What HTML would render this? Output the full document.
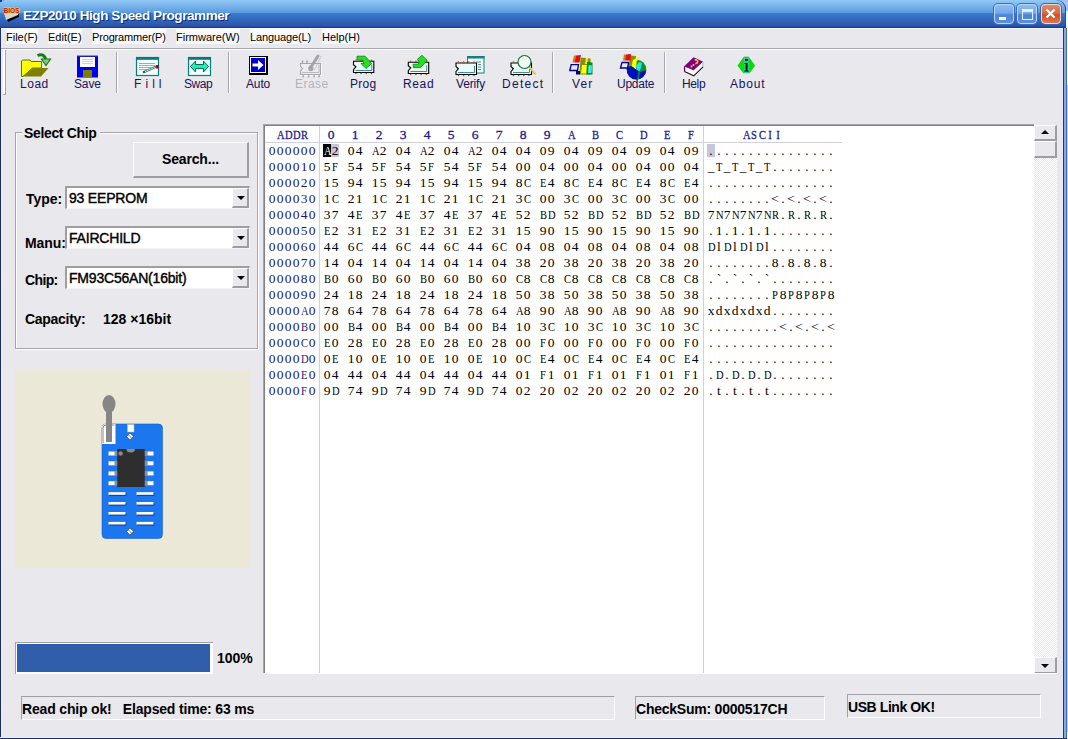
<!DOCTYPE html>
<html><head><meta charset="utf-8">
<style>
*{margin:0;padding:0;box-sizing:border-box}
html,body{width:1068px;height:739px;overflow:hidden}
body{position:relative;background:#c4cad6;font-family:"Liberation Sans",sans-serif;color:#000}
.a{position:absolute}
#win{position:absolute;left:0;top:0;width:1067px;height:739px;background:transparent}
#face{position:absolute;left:0;top:28px;width:1067px;height:711px;background:#e9e8ed}
/* title bar */
#tb{position:absolute;left:0;top:0;width:1066px;height:28px;border-radius:6px 9px 0 0;box-shadow:inset -1px 0 0 #2a4a8a;
background:linear-gradient(to bottom,#93caf6 0px,#78b3ea 6px,#5d9be0 12.5px,#3b7dcd 13px,#3471c4 17px,#2f5fb5 22px,#2c55ad 26px,#22408e 27px,#1d3a86 28px)}
#title{position:absolute;left:23px;top:8px;font-weight:bold;font-size:13.5px;color:#fff;letter-spacing:-0.42px;text-shadow:1px 1px 0 #0e2a6e;white-space:nowrap}
.tbtn{position:absolute;top:4px;width:20px;height:20px;border:1px solid #bcd6fb;border-radius:4px;box-shadow:0 0 0 1px #3a6cc4;
background:linear-gradient(to bottom,#8ebdf2,#74a8ea 45%,#4d84d6 55%,#5b8fd9)}
#close{border-color:#f4d8cc;background:linear-gradient(to bottom,#e08a70,#d86a48 45%,#d24e24 55%,#de7858)}
/* menu */
.menu{position:absolute;top:29px;height:15px;padding-top:1px;font-size:11px;line-height:15px;white-space:nowrap;background:#f9f9fb}
/* toolbar */
.tl{position:absolute;top:77px;font-size:12px;line-height:14px;color:#14145a;white-space:nowrap}
.sep{position:absolute;top:52px;width:2px;height:41px;border-left:1px solid #a6a6ac;border-right:1px solid #fff}
svg{position:absolute;overflow:visible}
/* left panel */
.lbl{position:absolute;font-weight:bold;font-size:14px;white-space:nowrap;line-height:16px}
.combo{position:absolute;left:65px;width:185px;height:23px;background:#fff;
border-top:2px solid #9d9da2;border-left:2px solid #9d9da2;border-bottom:1px solid #f4f4f4;border-right:1px solid #f4f4f4}
.combo .t{position:absolute;left:2px;top:2px;font-size:14px;line-height:16px;white-space:nowrap;letter-spacing:-0.2px;-webkit-text-stroke:0.4px #000}
.combo .dd{position:absolute;right:0;top:0;width:17px;height:20px;background:#e9e8ed;
border-top:1px solid #fff;border-left:1px solid #fff;border-right:2px solid #9d9da2;border-bottom:2px solid #9d9da2}
.combo .dd:after{content:"";position:absolute;left:4px;top:7px;border-left:4px solid transparent;border-right:4px solid transparent;border-top:4px solid #000}
/* hex */
#hex{position:absolute;left:263px;top:124px;width:771px;height:549px;background:#fff;border-top:1px solid #a4a4aa;border-left:1px solid #a4a4aa;box-shadow:inset 1px 1px 0 #808086}
.mono{font-family:"Liberation Serif",serif;font-size:13.5px;line-height:15px;white-space:pre}
.mono i,.mono u{font-style:normal;text-decoration:none;display:inline-block;width:8px;text-align:center}
.mono u{transform:scaleX(.78)}
.mono .w{color:#fff}
.addr{position:absolute;left:268px;color:#1a1a6e}
.hx{position:absolute;left:323px;color:#000}
.asc{position:absolute;left:707px;color:#000}

#hdr span{position:absolute;top:127px;color:#1a1a8a;width:8px;text-align:center;-webkit-text-stroke:0.3px #1a1a8a}
/* status */
.st{position:absolute;border-top:1px solid #a0a0a6;border-left:1px solid #a0a0a6;border-bottom:1px solid #fff;border-right:1px solid #fff}
.st .t{position:absolute;left:0px;font-weight:bold;font-size:14px;line-height:16px;white-space:nowrap}
</style></head><body>
<div id="win">
  <div class="a" style="left:1056px;top:0;width:12px;height:11px;background:#a0c4ee"></div>
  <div class="a" style="left:0;top:0;width:8px;height:8px;background:#7aaee8"></div>
  <div class="a" style="left:0;top:0;width:2px;height:2px;background:#203a7a"></div>
  <div class="a" style="left:1066px;top:11px;width:2px;height:17px;background:#f6f8fc"></div>
  <div class="a" style="left:1067px;top:11px;width:1px;height:74px;background:#f6f8fc"></div>
  <div class="a" style="left:1067px;top:732px;width:1px;height:7px;background:#f6f8fc"></div>
  <div id="face"></div>
  <!-- frame -->
  <div class="a" style="left:0;top:28px;width:1px;height:711px;background:#1f2f66"></div>
  <div class="a" style="left:1px;top:28px;width:1px;height:709px;background:#e4ecff"></div>
  <div class="a" style="left:1062px;top:28px;width:1px;height:709px;background:#e4ecff"></div>
  <div class="a" style="left:1063px;top:28px;width:1px;height:711px;background:#22376e"></div>
  <div class="a" style="left:1064px;top:28px;width:2px;height:711px;background:#86aadf"></div>
  <div class="a" style="left:1066px;top:28px;width:1px;height:711px;background:#4a6aa4"></div>
  <div class="a" style="left:0;top:737px;width:1063px;height:1px;background:#e8ecff"></div>
  <div class="a" style="left:0;top:738px;width:1067px;height:1px;background:#20306a"></div>

  <div id="tb"></div>
  <div class="a" style="left:1px;top:28px;width:1062px;height:1px;background:#f2f4fc"></div>
  <!-- app icon -->
  <svg style="left:3px;top:7px" width="16" height="14" viewBox="0 0 16 14">
    <polygon points="3,9 16,6 16,10 5,15" fill="#000"/>
    <polygon points="1,6 16,5 15,8 3,13" fill="#d8d4cc"/>
    <text x="0.5" y="5.8" font-size="6.5" font-weight="bold" fill="#b81808" stroke="#f4d040" stroke-width="1.2" paint-order="stroke" font-family="Liberation Sans" textLength="16" lengthAdjust="spacingAndGlyphs">BIOS</text>
  </svg>
  <div id="title">EZP2010 High Speed Programmer</div>
  <div class="tbtn" style="left:994px"><div class="a" style="left:4px;top:12px;width:7px;height:3px;background:#fff"></div></div>
  <div class="tbtn" style="left:1017px"><div class="a" style="left:4px;top:4px;width:11px;height:11px;border:1px solid #e4f0ff;border-top-width:3px"></div></div>
  <div class="tbtn" id="close" style="left:1041px;box-shadow:0 0 0 1px #3a64b4">
    <svg style="left:3px;top:3px" width="11" height="11" viewBox="0 0 11 11"><path d="M1.5 1.5 L9.5 9.5 M9.5 1.5 L1.5 9.5" stroke="#fff" stroke-width="2.3"/></svg>
  </div>

  <!-- menu -->
  <div class="menu" style="left:6px">File(F)</div>
  <div class="menu" style="left:48px">Edit(E)</div>
  <div class="menu" style="left:92px;letter-spacing:-0.16px">Programmer(P)</div>
  <div class="menu" style="left:176px">Firmware(W)</div>
  <div class="menu" style="left:250px;letter-spacing:-0.11px">Language(L)</div>
  <div class="menu" style="left:322px">Help(H)</div>
  <div class="a" style="left:1px;top:48px;width:1062px;height:1px;background:#a8a8b0"></div>
  <div class="a" style="left:1px;top:49px;width:1062px;height:1px;background:#fff"></div>

  <!-- toolbar gripper -->
  <div class="a" style="left:3px;top:50px;width:2px;height:44px;background:#fff"></div>
  <div class="a" style="left:5px;top:50px;width:1px;height:45px;background:#a6a6ac"></div>
  <div class="a" style="left:3px;top:94px;width:3px;height:1px;background:#a6a6ac"></div>
  <div class="sep" style="left:116px"></div>
  <div class="sep" style="left:228px"></div>
  <div class="sep" style="left:552px"></div>
  <div class="sep" style="left:664px"></div>

  <svg style="left:0;top:0" width="1068" height="100" viewBox="0 0 1068 100">
<path d="M21.5,76.5 V61 L22.5,60 H30 L31,61.5 H41.5 V68 H32.5 L23,76.5 Z" fill="#ffff00" stroke="#607000" stroke-width="1"/>
<polygon points="22.5,76.5 32.5,68 48.5,68 41,76.5" fill="#808000"/>
<path d="M37.5,55.5 Q44,52.5 46,60" fill="none" stroke="#108010" stroke-width="3"/>
<polygon points="41.5,59 50.5,59 46,65.5" fill="#90c090" stroke="#108010" stroke-width="1.2"/>

<rect x="77" y="56" width="21" height="21.5" fill="#0000f0"/>
<rect x="77" y="55.5" width="21" height="1" fill="#404060"/>
<rect x="80" y="57" width="15" height="10" fill="#fbfbf8"/>
<path d="M82,59.5 H93 M82,61.5 H93 M82,63.5 H93" stroke="#c8c8c8" stroke-width="0.8"/>
<rect x="83" y="70" width="9" height="7.5" fill="#808000"/>

<rect x="136.5" y="57.5" width="22" height="18" fill="#f2fdfd" stroke="#008080" stroke-width="1.2"/>
<rect x="136" y="57" width="23" height="2.8" fill="#0c7878"/>
<path d="M139,63.5 H155 M139,65.5 H155 M139,67.5 H151 M139,69.5 H147" stroke="#a09090" stroke-width="0.8"/>
<path d="M143,72.5 L156.5,66.5" stroke="#1a6060" stroke-width="2.2"/>
<path d="M145,71.6 L155.5,67" stroke="#e0f0f0" stroke-width="0.9"/>
<rect x="156" y="65" width="3" height="3.5" fill="#b00020"/>

<rect x="188.5" y="57.5" width="22" height="18" fill="#f2fdfd" stroke="#008080" stroke-width="1.2"/>
<rect x="188" y="57" width="23" height="2.8" fill="#0c7878"/>
<polygon points="190.5,66.5 195.5,61 195.5,64.5 203.5,64.5 203.5,61 208.5,66.5 203.5,72 203.5,68.5 195.5,68.5 195.5,72" fill="#20e8c8" stroke="#087040" stroke-width="1"/>

<rect x="249" y="56" width="19" height="19" fill="#000"/>
<rect x="250" y="57" width="16" height="16" fill="#fff"/>
<rect x="251" y="58" width="14" height="14" fill="#0000c8"/>
<polygon points="252.5,63.5 258,63.5 258,60 263.5,65 258,70 258,66.5 252.5,66.5" fill="#fff"/>

<g transform="translate(1,1)" stroke="#fff" fill="none" opacity="0.9">
<path d="M300.5,63.5 H320.5 V74.5 H300.5 V71 L302.5,68.5 L300.5,66 Z" stroke-width="1.1"/>
</g>
<path d="M300.5,63.5 H320.5 V74.5 H300.5 V71 L302.5,68.5 L300.5,66 Z" fill="#ecebef" stroke="#a8a8ac" stroke-width="1.1"/>
<path d="M302,72.5 H319 V64.5" fill="none" stroke="#b4b4b8" stroke-width="0.9"/>
<path d="M302.5,63 V60.5 M307,63 V60.5" stroke="#a8a8ac" stroke-width="1.6"/>
<path d="M302.3,76.2 H304 M307.8,76.2 H309.5 M313.3,76.2 H315 M318.3,76.2 H320" stroke="#a8a8ac" stroke-width="2"/>
<path d="M311,67 L318,56" stroke="#a4a4a8" stroke-width="3" stroke-linecap="round"/>
<ellipse cx="310.8" cy="68.3" rx="2.6" ry="2.9" fill="#a4a4a8"/>
<path d="M314.5,70 L321.5,55.5" stroke="#b0b0b4" stroke-width="1" stroke-dasharray="1.2,0.8"/>
<path d="M353.5,61.3 H373.8 V72.5 H353.5 V69.588 L355.9,66.89999999999999 L353.5,64.66 Z" fill="#eefafa" stroke="#000" stroke-width="1.1"/><path d="M355.5,70.5 H371.8 V64.3" fill="none" stroke="#3a9090" stroke-width="1"/><circle cx="355.9" cy="60.3" r="0.8" fill="#b05010"/><circle cx="355.9" cy="73.5" r="0.8" fill="#b05010"/><circle cx="361.09999999999997" cy="60.3" r="0.8" fill="#b05010"/><circle cx="361.09999999999997" cy="73.5" r="0.8" fill="#b05010"/><circle cx="366.29999999999995" cy="60.3" r="0.8" fill="#b05010"/><circle cx="366.29999999999995" cy="73.5" r="0.8" fill="#b05010"/><circle cx="371.5" cy="60.3" r="0.8" fill="#b05010"/><circle cx="371.5" cy="73.5" r="0.8" fill="#b05010"/>
<polygon points="357,56.2 365,56.2 369.5,61 371.5,63.5 366,68.5 361,63.5 364,63.5 362.5,60 357,60" fill="#22e022" stroke="#0c800c" stroke-width="0.8"/>
<path d="M408.3,62.3 H428.7 V73.5 H408.3 V70.588 L410.7,67.89999999999999 L408.3,65.66 Z" fill="#eefafa" stroke="#000" stroke-width="1.1"/><path d="M410.3,71.5 H426.7 V65.3" fill="none" stroke="#3a9090" stroke-width="1"/><circle cx="410.7" cy="61.3" r="0.8" fill="#b05010"/><circle cx="410.7" cy="74.5" r="0.8" fill="#b05010"/><circle cx="415.9" cy="61.3" r="0.8" fill="#b05010"/><circle cx="415.9" cy="74.5" r="0.8" fill="#b05010"/><circle cx="421.09999999999997" cy="61.3" r="0.8" fill="#b05010"/><circle cx="421.09999999999997" cy="74.5" r="0.8" fill="#b05010"/><circle cx="426.3" cy="61.3" r="0.8" fill="#b05010"/><circle cx="426.3" cy="74.5" r="0.8" fill="#b05010"/>
<polygon points="413.2,64.2 418.2,64.2 419.3,61.4 417.2,59.6 422,55.2 426.8,60 426.8,61 420.5,67.5 413.2,67.5" fill="#22e022" stroke="#0c800c" stroke-width="0.8"/>

<rect x="467.5" y="56.5" width="16.5" height="16.5" fill="#f0fcfc" stroke="#108080" stroke-width="1"/>
<rect x="467" y="56" width="17.5" height="2.5" fill="#108080"/>
<path d="M476,62 H481 M478,64.5 H481 M478,67 H481 M478,69.5 H481" stroke="#309090" stroke-width="0.9"/>
<path d="M456,63 H476.5 V74.5 H456 V71.51 L458.4,68.75 L456,66.45 Z" fill="#eefafa" stroke="#000" stroke-width="1.1"/><path d="M458,72.5 H474.5 V66" fill="none" stroke="#3a9090" stroke-width="1"/><circle cx="458.4" cy="62" r="0.8" fill="#b05010"/><circle cx="458.4" cy="75.5" r="0.8" fill="#b05010"/><circle cx="463.59999999999997" cy="62" r="0.8" fill="#b05010"/><circle cx="463.59999999999997" cy="75.5" r="0.8" fill="#b05010"/><circle cx="468.79999999999995" cy="62" r="0.8" fill="#b05010"/><circle cx="468.79999999999995" cy="75.5" r="0.8" fill="#b05010"/><circle cx="474.0" cy="62" r="0.8" fill="#b05010"/><circle cx="474.0" cy="75.5" r="0.8" fill="#b05010"/><path d="M511,63 H531.5 V74.5 H511 V71.51 L513.4,68.75 L511,66.45 Z" fill="#eefafa" stroke="#000" stroke-width="1.1"/><path d="M513,72.5 H529.5 V66" fill="none" stroke="#3a9090" stroke-width="1"/><circle cx="513.4" cy="62" r="0.8" fill="#b05010"/><circle cx="513.4" cy="75.5" r="0.8" fill="#b05010"/><circle cx="518.6" cy="62" r="0.8" fill="#b05010"/><circle cx="518.6" cy="75.5" r="0.8" fill="#b05010"/><circle cx="523.8" cy="62" r="0.8" fill="#b05010"/><circle cx="523.8" cy="75.5" r="0.8" fill="#b05010"/><circle cx="529.0" cy="62" r="0.8" fill="#b05010"/><circle cx="529.0" cy="75.5" r="0.8" fill="#b05010"/>
<circle cx="524.5" cy="62" r="6.5" fill="#f2f8f2" stroke="#107030" stroke-width="1.1"/>
<path d="M529.5,67.5 L536,74.5" stroke="#e0dc70" stroke-width="2.4"/>
<path d="M530,68.8 L535.5,74.6" stroke="#a8a040" stroke-width="0.7"/>

<polygon points="572.5,62.5 574,55.5 576,55.5 574.5,62.5" fill="#d07820"/>
<polygon points="574.5,62.5 576,55.5 581,55 579.5,62.5" fill="#e01010"/>
<polygon points="579.5,74.5 580.5,57.5 590.5,58.5 590.5,74.5" fill="#889000"/>
<polygon points="581,73.5 582,65 587,65 586.5,73.5" fill="#ffff00"/>
<polygon points="585,64 586,58 588,58 587.5,64" fill="#f0f040"/>
<polygon points="586.5,74.5 587,62 592.5,62.5 592.5,74.5" fill="#108818"/>
<polygon points="588,73 588.5,65 592,65.5 591.5,73" fill="#30f0f0"/>
<path d="M569.8,70.5 L571.2,64.6 H578.5 L577.5,70.5 Z" fill="#e8e8f8" stroke="#000090" stroke-width="1.3"/>
<rect x="576" y="71" width="4" height="3.5" fill="#000080"/>

<circle cx="636.5" cy="69.5" r="9.8" fill="#109030"/>
<polygon points="628.6,69.5 630,55.6 636,56 634,69.5" fill="#8a9000"/>
<polygon points="631,69 633,60 637,58 636,69" fill="#ffff00"/>
<polygon points="635.5,61 638,57 640,57.5 637,61" fill="#f0f040"/>
<polygon points="636,66 639,62 642,63 640,71 637,70" fill="#20e8e8"/>
<path d="M626.7,69 Q629,64 633,67 Q636,70 640,72 Q644,70 646.3,70.5 A9.8,9.8 0 0 1 626.7,69 Z" fill="#0010b8"/>
<path d="M637,79 L638.5,71 L640,71.5 L639,79 Z" fill="#108050"/>
<polygon points="623,60.5 624,54.5 626,54.5 625,60.5" fill="#d07820"/>
<polygon points="625,60.5 626,54.5 631,54 630.5,60.5" fill="#e01010"/>
<path d="M620.5,68 L622,62.5 H628.5 L627.5,68 Z" fill="#e8e8f8" stroke="#000090" stroke-width="1.3"/>

<polygon points="684,66.5 693.6,57.2 703.2,61.8 693.6,70.4" fill="#800080"/>
<polygon points="684.2,66.5 693.6,70.4 703.2,61.8 703.2,66.8 693.8,75.8 684.2,71.5" fill="#fff"/>
<path d="M703,62 V66.8" stroke="#b0a0b0" stroke-width="0.8"/>
<path d="M684.6,66.3 V71.5" stroke="#600060" stroke-width="1.3"/>
<path d="M684.5,71.5 L693.8,75.8 L703,66.8" fill="none" stroke="#201020" stroke-width="1.1"/>
<path d="M694.6,60 Q698.2,59.6 697.6,62.4 Q697,63.6 695.3,63.6" fill="none" stroke="#f0c030" stroke-width="1.7"/>
<circle cx="693.5" cy="64.9" r="1" fill="#f0d060"/>
<circle cx="691.5" cy="66.6" r="1" fill="#f0d060"/>

<polygon points="744,57 748.5,57 754.8,65.6 749.5,72.8 743.3,72.8 737.9,65.6" fill="#00e000" stroke="#10b810" stroke-width="0.6"/>
<rect x="744.6" y="58.6" width="3.6" height="2.6" fill="#000060" stroke="#50e0d0" stroke-width="0.7"/>
<path d="M743.8,62.4 H748 V70.2 H749.2 V72 H743.8 V70.2 H745.2 V64 H743.8 Z" fill="#000060" stroke="#50e0d0" stroke-width="0.7"/>
</svg>

  <div class="tl" style="left:20px;letter-spacing:0.53px">Load</div>
  <div class="tl" style="left:74px;letter-spacing:-0.13px">Save</div>
  <div class="tl" style="left:134px;letter-spacing:4.07px">Fill</div>
  <div class="tl" style="left:184px;letter-spacing:-0.43px">Swap</div>
  <div class="tl" style="left:246px;letter-spacing:-0.13px">Auto</div>
  <div class="tl" style="left:295px;letter-spacing:0.45px;color:#b4b4b8">Erase</div>
  <div class="tl" style="left:350px;letter-spacing:0.3px">Prog</div>
  <div class="tl" style="left:403px;letter-spacing:0.63px">Read</div>
  <div class="tl" style="left:456px;letter-spacing:-0.16px">Verify</div>
  <div class="tl" style="left:502px;letter-spacing:1.3px">Detect</div>
  <div class="tl" style="left:572px;letter-spacing:1.1px">Ver</div>
  <div class="tl" style="left:617px;letter-spacing:-0.26px">Update</div>
  <div class="tl" style="left:682px;letter-spacing:-0.37px">Help</div>
  <div class="tl" style="left:730px;letter-spacing:0.82px">About</div>

  <!-- group box -->
  <div class="a" style="left:16px;top:133px;width:243px;height:217px;border:1px solid #fff"></div>
  <div class="a" style="left:15px;top:132px;width:243px;height:217px;border:1px solid #a4a4aa"></div>
  <div class="lbl" style="left:22px;top:125px;background:#e9e8ed;padding:0 4px 0 2px;letter-spacing:-0.35px">Select Chip</div>
  <div class="a" style="left:133px;top:142px;width:116px;height:36px;border-top:1px solid #fff;border-left:1px solid #fff;border-right:2px solid #9d9da2;border-bottom:2px solid #9d9da2"></div>
  <div class="lbl" style="left:162px;top:151px;letter-spacing:-0.16px">Search...</div>
  <div class="lbl" style="left:26px;top:191px;letter-spacing:-0.05px">Type:</div>
  <div class="combo" style="top:186px"><div class="t">93 EEPROM</div><div class="dd"></div></div>
  <div class="lbl" style="left:25px;top:235px;letter-spacing:-0.1px">Manu:</div>
  <div class="combo" style="top:226px"><div class="t">FAIRCHILD</div><div class="dd"></div></div>
  <div class="lbl" style="left:25px;top:272px;letter-spacing:-0.62px">Chip:</div>
  <div class="combo" style="top:266px"><div class="t">FM93C56AN(16bit)</div><div class="dd"></div></div>
  <div class="lbl" style="left:25px;top:311px;letter-spacing:-0.29px">Capacity:</div>
  <div class="lbl" style="left:103px;top:311px">128 ×16bit</div>

  <!-- chip picture -->
  <div class="a" style="left:15px;top:370px;width:235px;height:198px;background:#ebe8d8"></div>
  <svg style="left:0;top:0" width="1068" height="739" viewBox="0 0 1068 739"><rect x="102" y="424" width="60.5" height="114.5" rx="4" fill="#1c77ee" stroke="#1560c8" stroke-width="0.6"/><path d="M102,444 V428 Q102,424 106,424 H115.5 V444 Z" fill="#fff"/><path d="M103,443 V428 Q103,425 106,425 H114.5" fill="none" stroke="#666" stroke-width="0.8"/><ellipse cx="109" cy="404" rx="6.5" ry="9" fill="#868686"/><rect x="106" y="404" width="6" height="38" fill="#868686"/><rect x="127.5" y="424.5" width="6.5" height="7.5" fill="#fff" stroke="#bbb" stroke-width="0.5"/><rect x="127.5" y="434" width="5" height="5" transform="rotate(45 130 436.5)" fill="#fff" stroke="#333" stroke-width="0.6"/><path d="M128.2,434.7 L131.8,438.3" stroke="#555" stroke-width="0.8"/><rect x="127.5" y="529" width="5" height="5" transform="rotate(45 130 531.5)" fill="#fff" stroke="#333" stroke-width="0.6"/><path d="M128.2,529.7 L131.8,533.3" stroke="#555" stroke-width="0.8"/><rect x="117.2" y="449" width="27.6" height="38" fill="#2e2e2e"/><path d="M126.5,449 A4.2,3.5 0 0 0 135,449 Z" fill="#8a8a8a"/><circle cx="120.6" cy="453.5" r="2.2" fill="#8a8a8a"/><rect x="108.5" y="451.5" width="6.5" height="4" fill="#fff"/><rect x="114.5" y="451.0" width="2.7" height="5" fill="#909090"/><rect x="147.2" y="451.5" width="6.3" height="4" fill="#fff"/><rect x="144.8" y="451.0" width="2.7" height="5" fill="#909090"/><rect x="108.5" y="461.3" width="6.5" height="4" fill="#fff"/><rect x="114.5" y="460.8" width="2.7" height="5" fill="#909090"/><rect x="147.2" y="461.3" width="6.3" height="4" fill="#fff"/><rect x="144.8" y="460.8" width="2.7" height="5" fill="#909090"/><rect x="108.5" y="471.4" width="6.5" height="4" fill="#fff"/><rect x="114.5" y="470.9" width="2.7" height="5" fill="#909090"/><rect x="147.2" y="471.4" width="6.3" height="4" fill="#fff"/><rect x="144.8" y="470.9" width="2.7" height="5" fill="#909090"/><rect x="108.5" y="481.2" width="6.5" height="4" fill="#fff"/><rect x="114.5" y="480.7" width="2.7" height="5" fill="#909090"/><rect x="147.2" y="481.2" width="6.3" height="4" fill="#fff"/><rect x="144.8" y="480.7" width="2.7" height="5" fill="#909090"/><rect x="109.1" y="493.0" width="17.3" height="2.8" fill="#0c3a98"/><rect x="108.5" y="492.2" width="17" height="2.6" fill="#fff"/><rect x="137.1" y="493.0" width="17.3" height="2.8" fill="#0c3a98"/><rect x="136.5" y="492.2" width="17" height="2.6" fill="#fff"/><rect x="109.1" y="502.8" width="17.3" height="2.8" fill="#0c3a98"/><rect x="108.5" y="502" width="17" height="2.6" fill="#fff"/><rect x="137.1" y="502.8" width="17.3" height="2.8" fill="#0c3a98"/><rect x="136.5" y="502" width="17" height="2.6" fill="#fff"/><rect x="109.1" y="512.8" width="17.3" height="2.8" fill="#0c3a98"/><rect x="108.5" y="512" width="17" height="2.6" fill="#fff"/><rect x="137.1" y="512.8" width="17.3" height="2.8" fill="#0c3a98"/><rect x="136.5" y="512" width="17" height="2.6" fill="#fff"/><rect x="109.1" y="522.6999999999999" width="17.3" height="2.8" fill="#0c3a98"/><rect x="108.5" y="521.9" width="17" height="2.6" fill="#fff"/><rect x="137.1" y="522.6999999999999" width="17.3" height="2.8" fill="#0c3a98"/><rect x="136.5" y="521.9" width="17" height="2.6" fill="#fff"/></svg>

  <!-- progress -->
  <div class="a" style="left:15px;top:642px;width:198px;height:32px;border-top:1px solid #a0a0a6;border-left:1px solid #a0a0a6;background:#fafcff"></div>
  <div class="a" style="left:17px;top:644px;width:193px;height:28px;background:#315eab"></div>
  <div class="lbl" style="left:217px;top:650px">100%</div>

  <!-- hex view -->
  <div id="hex"></div>
  <div class="a" style="left:265px;top:142px;width:577px;height:1px;background:#d0d0de"></div>
  <div class="a" style="left:319px;top:126px;width:1px;height:547px;background:#d0d0de"></div>
  <div class="a" style="left:703px;top:126px;width:1px;height:547px;background:#d0d0de"></div>
  <div class="a mono" style="left:276px;top:127px;color:#1a1a8a;-webkit-text-stroke:0.3px #1a1a8a"><u>A</u><u>D</u><u>D</u><u>R</u></div>
  <div id="hdr" class="mono"><span style="left:327px">0</span><span style="left:351px">1</span><span style="left:375px">2</span><span style="left:399px">3</span><span style="left:423px">4</span><span style="left:447px">5</span><span style="left:471px">6</span><span style="left:495px">7</span><span style="left:519px">8</span><span style="left:543px">9</span><span style="left:567px"><u>A</u></span><span style="left:591px"><u>B</u></span><span style="left:615px"><u>C</u></span><span style="left:639px"><u>D</u></span><span style="left:663px"><u>E</u></span><span style="left:687px"><u>F</u></span></div>
  <div class="a mono" style="left:742px;top:127px;color:#1a1a8a;-webkit-text-stroke:0.3px #1a1a8a"><u>A</u><u>S</u><u>C</u><u>I</u><u>I</u></div>
  <div class="a" style="left:323px;top:144px;width:8px;height:13px;background:#000"></div>
  <div class="a" style="left:331px;top:144px;width:8px;height:13px;background:#c6c6dc"></div>
  <div class="a" style="left:707px;top:144px;width:8px;height:13px;background:#c6c6dc"></div>
  <div class="mono">
<div class="addr" style="top:143px"><i>0</i><i>0</i><i>0</i><i>0</i><i>0</i><i>0</i></div><div class="hx" style="top:143px"><u class="w">A</u><i>2</i><i></i><i>0</i><i>4</i><i></i><u>A</u><i>2</i><i></i><i>0</i><i>4</i><i></i><u>A</u><i>2</i><i></i><i>0</i><i>4</i><i></i><u>A</u><i>2</i><i></i><i>0</i><i>4</i><i></i><i>0</i><i>4</i><i></i><i>0</i><i>9</i><i></i><i>0</i><i>4</i><i></i><i>0</i><i>9</i><i></i><i>0</i><i>4</i><i></i><i>0</i><i>9</i><i></i><i>0</i><i>4</i><i></i><i>0</i><i>9</i></div><div class="asc" style="top:143px"><i>.</i><i>.</i><i>.</i><i>.</i><i>.</i><i>.</i><i>.</i><i>.</i><i>.</i><i>.</i><i>.</i><i>.</i><i>.</i><i>.</i><i>.</i><i>.</i></div>
<div class="addr" style="top:159px"><i>0</i><i>0</i><i>0</i><i>0</i><i>1</i><i>0</i></div><div class="hx" style="top:159px"><i>5</i><u>F</u><i></i><i>5</i><i>4</i><i></i><i>5</i><u>F</u><i></i><i>5</i><i>4</i><i></i><i>5</i><u>F</u><i></i><i>5</i><i>4</i><i></i><i>5</i><u>F</u><i></i><i>5</i><i>4</i><i></i><i>0</i><i>0</i><i></i><i>0</i><i>4</i><i></i><i>0</i><i>0</i><i></i><i>0</i><i>4</i><i></i><i>0</i><i>0</i><i></i><i>0</i><i>4</i><i></i><i>0</i><i>0</i><i></i><i>0</i><i>4</i></div><div class="asc" style="top:159px"><i>_</i><u>T</u><i>_</i><u>T</u><i>_</i><u>T</u><i>_</i><u>T</u><i>.</i><i>.</i><i>.</i><i>.</i><i>.</i><i>.</i><i>.</i><i>.</i></div>
<div class="addr" style="top:175px"><i>0</i><i>0</i><i>0</i><i>0</i><i>2</i><i>0</i></div><div class="hx" style="top:175px"><i>1</i><i>5</i><i></i><i>9</i><i>4</i><i></i><i>1</i><i>5</i><i></i><i>9</i><i>4</i><i></i><i>1</i><i>5</i><i></i><i>9</i><i>4</i><i></i><i>1</i><i>5</i><i></i><i>9</i><i>4</i><i></i><i>8</i><u>C</u><i></i><u>E</u><i>4</i><i></i><i>8</i><u>C</u><i></i><u>E</u><i>4</i><i></i><i>8</i><u>C</u><i></i><u>E</u><i>4</i><i></i><i>8</i><u>C</u><i></i><u>E</u><i>4</i></div><div class="asc" style="top:175px"><i>.</i><i>.</i><i>.</i><i>.</i><i>.</i><i>.</i><i>.</i><i>.</i><i>.</i><i>.</i><i>.</i><i>.</i><i>.</i><i>.</i><i>.</i><i>.</i></div>
<div class="addr" style="top:191px"><i>0</i><i>0</i><i>0</i><i>0</i><i>3</i><i>0</i></div><div class="hx" style="top:191px"><i>1</i><u>C</u><i></i><i>2</i><i>1</i><i></i><i>1</i><u>C</u><i></i><i>2</i><i>1</i><i></i><i>1</i><u>C</u><i></i><i>2</i><i>1</i><i></i><i>1</i><u>C</u><i></i><i>2</i><i>1</i><i></i><i>3</i><u>C</u><i></i><i>0</i><i>0</i><i></i><i>3</i><u>C</u><i></i><i>0</i><i>0</i><i></i><i>3</i><u>C</u><i></i><i>0</i><i>0</i><i></i><i>3</i><u>C</u><i></i><i>0</i><i>0</i></div><div class="asc" style="top:191px"><i>.</i><i>.</i><i>.</i><i>.</i><i>.</i><i>.</i><i>.</i><i>.</i><i>&lt;</i><i>.</i><i>&lt;</i><i>.</i><i>&lt;</i><i>.</i><i>&lt;</i><i>.</i></div>
<div class="addr" style="top:207px"><i>0</i><i>0</i><i>0</i><i>0</i><i>4</i><i>0</i></div><div class="hx" style="top:207px"><i>3</i><i>7</i><i></i><i>4</i><u>E</u><i></i><i>3</i><i>7</i><i></i><i>4</i><u>E</u><i></i><i>3</i><i>7</i><i></i><i>4</i><u>E</u><i></i><i>3</i><i>7</i><i></i><i>4</i><u>E</u><i></i><i>5</i><i>2</i><i></i><u>B</u><u>D</u><i></i><i>5</i><i>2</i><i></i><u>B</u><u>D</u><i></i><i>5</i><i>2</i><i></i><u>B</u><u>D</u><i></i><i>5</i><i>2</i><i></i><u>B</u><u>D</u></div><div class="asc" style="top:207px"><i>7</i><u>N</u><i>7</i><u>N</u><i>7</i><u>N</u><i>7</i><u>N</u><u>R</u><i>.</i><u>R</u><i>.</i><u>R</u><i>.</i><u>R</u><i>.</i></div>
<div class="addr" style="top:223px"><i>0</i><i>0</i><i>0</i><i>0</i><i>5</i><i>0</i></div><div class="hx" style="top:223px"><u>E</u><i>2</i><i></i><i>3</i><i>1</i><i></i><u>E</u><i>2</i><i></i><i>3</i><i>1</i><i></i><u>E</u><i>2</i><i></i><i>3</i><i>1</i><i></i><u>E</u><i>2</i><i></i><i>3</i><i>1</i><i></i><i>1</i><i>5</i><i></i><i>9</i><i>0</i><i></i><i>1</i><i>5</i><i></i><i>9</i><i>0</i><i></i><i>1</i><i>5</i><i></i><i>9</i><i>0</i><i></i><i>1</i><i>5</i><i></i><i>9</i><i>0</i></div><div class="asc" style="top:223px"><i>.</i><i>1</i><i>.</i><i>1</i><i>.</i><i>1</i><i>.</i><i>1</i><i>.</i><i>.</i><i>.</i><i>.</i><i>.</i><i>.</i><i>.</i><i>.</i></div>
<div class="addr" style="top:239px"><i>0</i><i>0</i><i>0</i><i>0</i><i>6</i><i>0</i></div><div class="hx" style="top:239px"><i>4</i><i>4</i><i></i><i>6</i><u>C</u><i></i><i>4</i><i>4</i><i></i><i>6</i><u>C</u><i></i><i>4</i><i>4</i><i></i><i>6</i><u>C</u><i></i><i>4</i><i>4</i><i></i><i>6</i><u>C</u><i></i><i>0</i><i>4</i><i></i><i>0</i><i>8</i><i></i><i>0</i><i>4</i><i></i><i>0</i><i>8</i><i></i><i>0</i><i>4</i><i></i><i>0</i><i>8</i><i></i><i>0</i><i>4</i><i></i><i>0</i><i>8</i></div><div class="asc" style="top:239px"><u>D</u><i>l</i><u>D</u><i>l</i><u>D</u><i>l</i><u>D</u><i>l</i><i>.</i><i>.</i><i>.</i><i>.</i><i>.</i><i>.</i><i>.</i><i>.</i></div>
<div class="addr" style="top:255px"><i>0</i><i>0</i><i>0</i><i>0</i><i>7</i><i>0</i></div><div class="hx" style="top:255px"><i>1</i><i>4</i><i></i><i>0</i><i>4</i><i></i><i>1</i><i>4</i><i></i><i>0</i><i>4</i><i></i><i>1</i><i>4</i><i></i><i>0</i><i>4</i><i></i><i>1</i><i>4</i><i></i><i>0</i><i>4</i><i></i><i>3</i><i>8</i><i></i><i>2</i><i>0</i><i></i><i>3</i><i>8</i><i></i><i>2</i><i>0</i><i></i><i>3</i><i>8</i><i></i><i>2</i><i>0</i><i></i><i>3</i><i>8</i><i></i><i>2</i><i>0</i></div><div class="asc" style="top:255px"><i>.</i><i>.</i><i>.</i><i>.</i><i>.</i><i>.</i><i>.</i><i>.</i><i>8</i><i>.</i><i>8</i><i>.</i><i>8</i><i>.</i><i>8</i><i>.</i></div>
<div class="addr" style="top:271px"><i>0</i><i>0</i><i>0</i><i>0</i><i>8</i><i>0</i></div><div class="hx" style="top:271px"><u>B</u><i>0</i><i></i><i>6</i><i>0</i><i></i><u>B</u><i>0</i><i></i><i>6</i><i>0</i><i></i><u>B</u><i>0</i><i></i><i>6</i><i>0</i><i></i><u>B</u><i>0</i><i></i><i>6</i><i>0</i><i></i><u>C</u><i>8</i><i></i><u>C</u><i>8</i><i></i><u>C</u><i>8</i><i></i><u>C</u><i>8</i><i></i><u>C</u><i>8</i><i></i><u>C</u><i>8</i><i></i><u>C</u><i>8</i><i></i><u>C</u><i>8</i></div><div class="asc" style="top:271px"><i>.</i><i>`</i><i>.</i><i>`</i><i>.</i><i>`</i><i>.</i><i>`</i><i>.</i><i>.</i><i>.</i><i>.</i><i>.</i><i>.</i><i>.</i><i>.</i></div>
<div class="addr" style="top:287px"><i>0</i><i>0</i><i>0</i><i>0</i><i>9</i><i>0</i></div><div class="hx" style="top:287px"><i>2</i><i>4</i><i></i><i>1</i><i>8</i><i></i><i>2</i><i>4</i><i></i><i>1</i><i>8</i><i></i><i>2</i><i>4</i><i></i><i>1</i><i>8</i><i></i><i>2</i><i>4</i><i></i><i>1</i><i>8</i><i></i><i>5</i><i>0</i><i></i><i>3</i><i>8</i><i></i><i>5</i><i>0</i><i></i><i>3</i><i>8</i><i></i><i>5</i><i>0</i><i></i><i>3</i><i>8</i><i></i><i>5</i><i>0</i><i></i><i>3</i><i>8</i></div><div class="asc" style="top:287px"><i>.</i><i>.</i><i>.</i><i>.</i><i>.</i><i>.</i><i>.</i><i>.</i><u>P</u><i>8</i><u>P</u><i>8</i><u>P</u><i>8</i><u>P</u><i>8</i></div>
<div class="addr" style="top:303px"><i>0</i><i>0</i><i>0</i><i>0</i><u>A</u><i>0</i></div><div class="hx" style="top:303px"><i>7</i><i>8</i><i></i><i>6</i><i>4</i><i></i><i>7</i><i>8</i><i></i><i>6</i><i>4</i><i></i><i>7</i><i>8</i><i></i><i>6</i><i>4</i><i></i><i>7</i><i>8</i><i></i><i>6</i><i>4</i><i></i><u>A</u><i>8</i><i></i><i>9</i><i>0</i><i></i><u>A</u><i>8</i><i></i><i>9</i><i>0</i><i></i><u>A</u><i>8</i><i></i><i>9</i><i>0</i><i></i><u>A</u><i>8</i><i></i><i>9</i><i>0</i></div><div class="asc" style="top:303px"><i>x</i><i>d</i><i>x</i><i>d</i><i>x</i><i>d</i><i>x</i><i>d</i><i>.</i><i>.</i><i>.</i><i>.</i><i>.</i><i>.</i><i>.</i><i>.</i></div>
<div class="addr" style="top:319px"><i>0</i><i>0</i><i>0</i><i>0</i><u>B</u><i>0</i></div><div class="hx" style="top:319px"><i>0</i><i>0</i><i></i><u>B</u><i>4</i><i></i><i>0</i><i>0</i><i></i><u>B</u><i>4</i><i></i><i>0</i><i>0</i><i></i><u>B</u><i>4</i><i></i><i>0</i><i>0</i><i></i><u>B</u><i>4</i><i></i><i>1</i><i>0</i><i></i><i>3</i><u>C</u><i></i><i>1</i><i>0</i><i></i><i>3</i><u>C</u><i></i><i>1</i><i>0</i><i></i><i>3</i><u>C</u><i></i><i>1</i><i>0</i><i></i><i>3</i><u>C</u></div><div class="asc" style="top:319px"><i>.</i><i>.</i><i>.</i><i>.</i><i>.</i><i>.</i><i>.</i><i>.</i><i>.</i><i>&lt;</i><i>.</i><i>&lt;</i><i>.</i><i>&lt;</i><i>.</i><i>&lt;</i></div>
<div class="addr" style="top:335px"><i>0</i><i>0</i><i>0</i><i>0</i><u>C</u><i>0</i></div><div class="hx" style="top:335px"><u>E</u><i>0</i><i></i><i>2</i><i>8</i><i></i><u>E</u><i>0</i><i></i><i>2</i><i>8</i><i></i><u>E</u><i>0</i><i></i><i>2</i><i>8</i><i></i><u>E</u><i>0</i><i></i><i>2</i><i>8</i><i></i><i>0</i><i>0</i><i></i><u>F</u><i>0</i><i></i><i>0</i><i>0</i><i></i><u>F</u><i>0</i><i></i><i>0</i><i>0</i><i></i><u>F</u><i>0</i><i></i><i>0</i><i>0</i><i></i><u>F</u><i>0</i></div><div class="asc" style="top:335px"><i>.</i><i>.</i><i>.</i><i>.</i><i>.</i><i>.</i><i>.</i><i>.</i><i>.</i><i>.</i><i>.</i><i>.</i><i>.</i><i>.</i><i>.</i><i>.</i></div>
<div class="addr" style="top:351px"><i>0</i><i>0</i><i>0</i><i>0</i><u>D</u><i>0</i></div><div class="hx" style="top:351px"><i>0</i><u>E</u><i></i><i>1</i><i>0</i><i></i><i>0</i><u>E</u><i></i><i>1</i><i>0</i><i></i><i>0</i><u>E</u><i></i><i>1</i><i>0</i><i></i><i>0</i><u>E</u><i></i><i>1</i><i>0</i><i></i><i>0</i><u>C</u><i></i><u>E</u><i>4</i><i></i><i>0</i><u>C</u><i></i><u>E</u><i>4</i><i></i><i>0</i><u>C</u><i></i><u>E</u><i>4</i><i></i><i>0</i><u>C</u><i></i><u>E</u><i>4</i></div><div class="asc" style="top:351px"><i>.</i><i>.</i><i>.</i><i>.</i><i>.</i><i>.</i><i>.</i><i>.</i><i>.</i><i>.</i><i>.</i><i>.</i><i>.</i><i>.</i><i>.</i><i>.</i></div>
<div class="addr" style="top:367px"><i>0</i><i>0</i><i>0</i><i>0</i><u>E</u><i>0</i></div><div class="hx" style="top:367px"><i>0</i><i>4</i><i></i><i>4</i><i>4</i><i></i><i>0</i><i>4</i><i></i><i>4</i><i>4</i><i></i><i>0</i><i>4</i><i></i><i>4</i><i>4</i><i></i><i>0</i><i>4</i><i></i><i>4</i><i>4</i><i></i><i>0</i><i>1</i><i></i><u>F</u><i>1</i><i></i><i>0</i><i>1</i><i></i><u>F</u><i>1</i><i></i><i>0</i><i>1</i><i></i><u>F</u><i>1</i><i></i><i>0</i><i>1</i><i></i><u>F</u><i>1</i></div><div class="asc" style="top:367px"><i>.</i><u>D</u><i>.</i><u>D</u><i>.</i><u>D</u><i>.</i><u>D</u><i>.</i><i>.</i><i>.</i><i>.</i><i>.</i><i>.</i><i>.</i><i>.</i></div>
<div class="addr" style="top:383px"><i>0</i><i>0</i><i>0</i><i>0</i><u>F</u><i>0</i></div><div class="hx" style="top:383px"><i>9</i><u>D</u><i></i><i>7</i><i>4</i><i></i><i>9</i><u>D</u><i></i><i>7</i><i>4</i><i></i><i>9</i><u>D</u><i></i><i>7</i><i>4</i><i></i><i>9</i><u>D</u><i></i><i>7</i><i>4</i><i></i><i>0</i><i>2</i><i></i><i>2</i><i>0</i><i></i><i>0</i><i>2</i><i></i><i>2</i><i>0</i><i></i><i>0</i><i>2</i><i></i><i>2</i><i>0</i><i></i><i>0</i><i>2</i><i></i><i>2</i><i>0</i></div><div class="asc" style="top:383px"><i>.</i><i>t</i><i>.</i><i>t</i><i>.</i><i>t</i><i>.</i><i>t</i><i>.</i><i>.</i><i>.</i><i>.</i><i>.</i><i>.</i><i>.</i><i>.</i></div>
  </div>
  <!-- scrollbar -->
  <div class="a" style="left:1034px;top:125px;width:23px;height:548px;background:repeating-conic-gradient(#fff 0 25%,#e9e8ed 0 50%) 0 0/2px 2px"></div>
  <div class="a" style="left:1034px;top:125px;width:23px;height:16px;background:#e9e8ed;border-top:1px solid #fff;border-left:1px solid #fff;border-right:2px solid #9d9da2;border-bottom:2px solid #9d9da2">
    <div class="a" style="left:6px;top:4px;border-left:4px solid transparent;border-right:4px solid transparent;border-bottom:4px solid #000"></div></div>
  <div class="a" style="left:1034px;top:141px;width:23px;height:17px;background:#e9e8ed;border-top:1px solid #fff;border-left:1px solid #fff;border-right:2px solid #9d9da2;border-bottom:2px solid #9d9da2"></div>
  <div class="a" style="left:1034px;top:657px;width:23px;height:17px;background:#e9e8ed;border-top:1px solid #fff;border-left:1px solid #fff;border-right:2px solid #9d9da2;border-bottom:2px solid #9d9da2">
    <div class="a" style="left:6px;top:6px;border-left:4px solid transparent;border-right:4px solid transparent;border-top:4px solid #000"></div></div>
  <div class="a" style="left:264px;top:673px;width:794px;height:1px;background:#fff"></div>

  <!-- status bar -->
  <div class="st" style="left:21px;top:696px;width:594px;height:24px"><div class="t" style="top:4px;letter-spacing:-0.17px">Read chip ok!&nbsp;&nbsp;&nbsp;Elapsed time: 63 ms</div></div>
  <div class="st" style="left:635px;top:696px;width:190px;height:24px"><div class="t" style="top:4px;letter-spacing:-0.23px">CheckSum: 0000517CH</div></div>
  <div class="st" style="left:847px;top:694px;width:194px;height:24px"><div class="t" style="top:4px;letter-spacing:-0.42px">USB Link OK!</div></div>
</div>
</body></html>
